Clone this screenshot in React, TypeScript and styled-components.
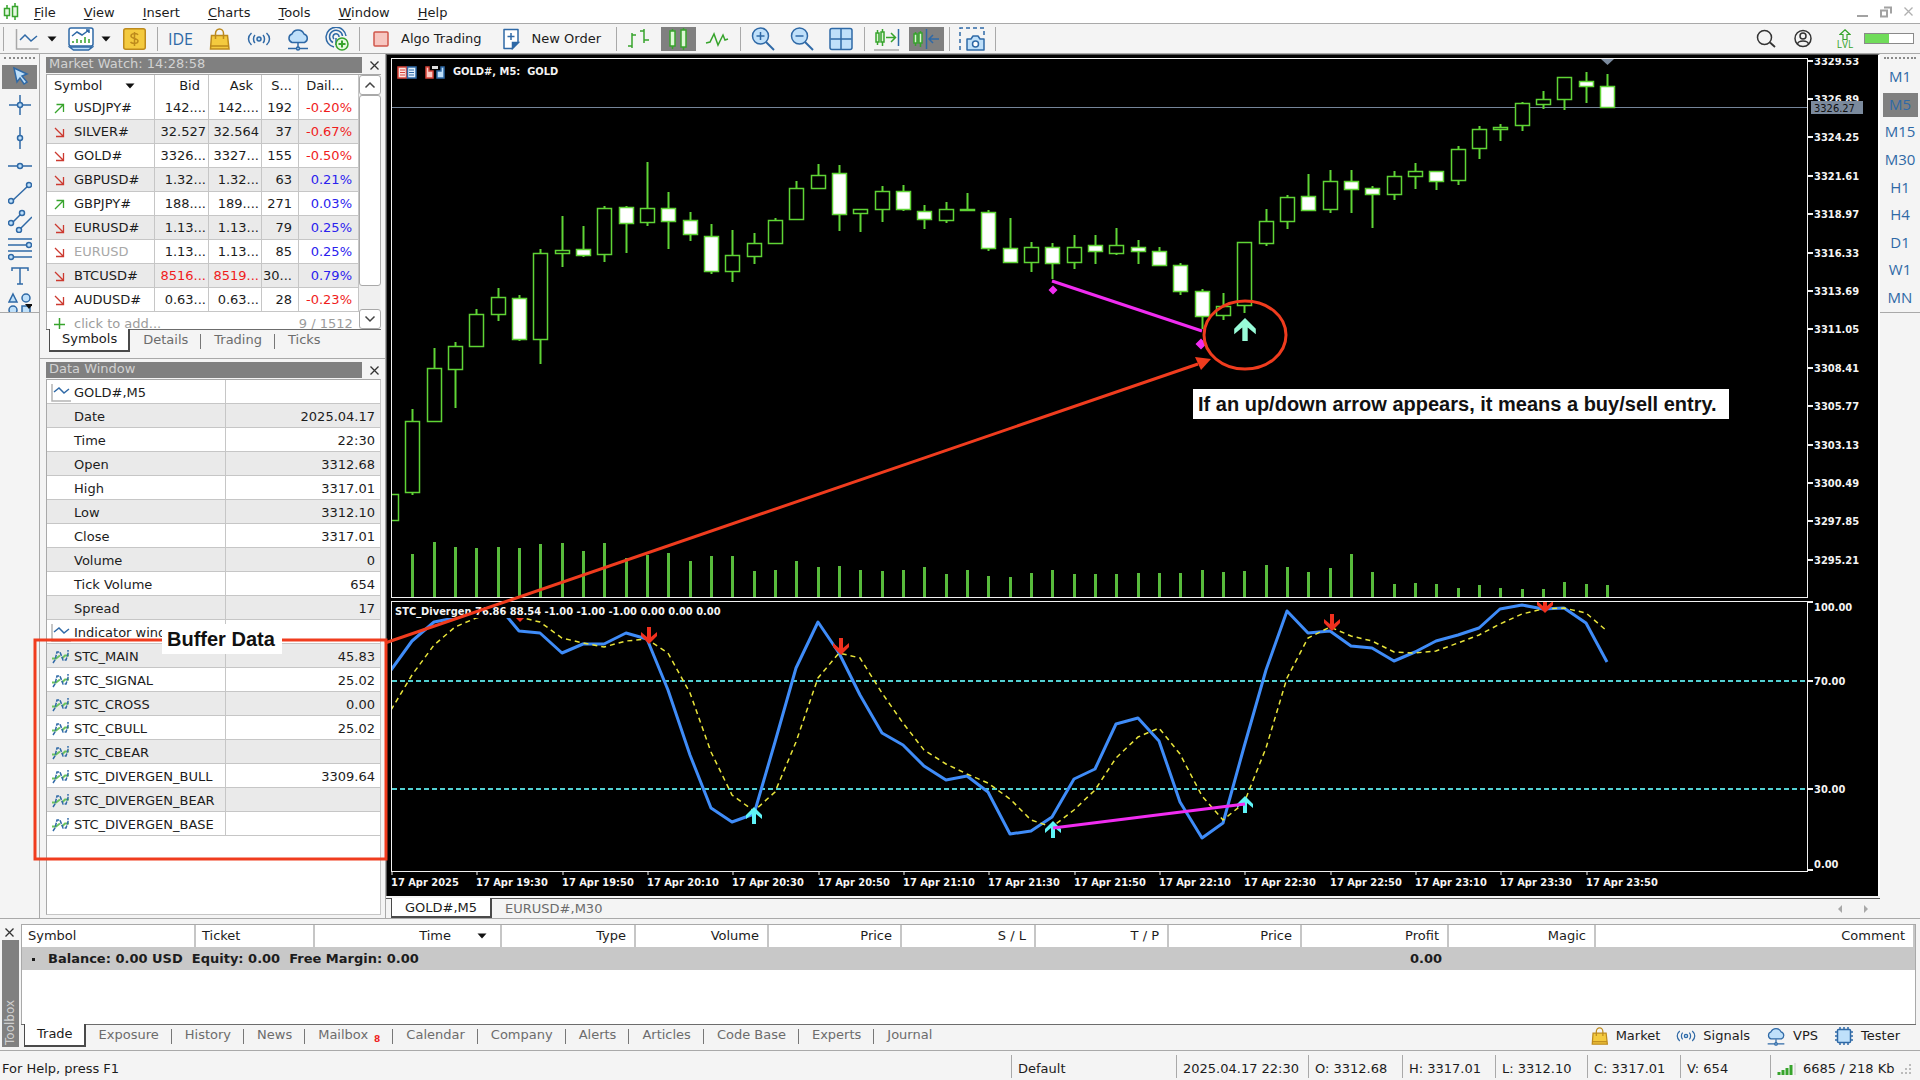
import React from "react";
import styled, { createGlobalStyle, css } from "styled-components";

const UI = '"DejaVu Sans", Verdana, sans-serif';
const NARROW = '"DejaVu Sans Condensed", "DejaVu Sans", sans-serif';
const HUMAN = '"Open Sans", "Noto Sans", sans-serif';
const NOTE = '"Liberation Sans", Arial, sans-serif';

const C = {
  face: "#f4f4f4",
  line: "#a9a9a9",
  grid: "#c6c6c6",
  zebra: "#eaeaea",
  dark: "#808080",
  text: "#1c1c1c",
  muted: "#6c6c6c",
  blue: "#2f69a6",
  sky: "#bfe0fa",
  green: "#37a42c",
  lime: "#5fd435",
  red: "#f03c1e",
  gold: "#f4ca3e",
  goldEdge: "#bd8a1c",
};

const GlobalStyle = createGlobalStyle`
  *, *::before, *::after { box-sizing: border-box; }
  body { margin: 0; background: ${C.face}; }
  button { font: inherit; color: inherit; background: none; border: 0; padding: 0; }
  table { border-collapse: separate; border-spacing: 0; }
`;

const Page = styled.div`
  display: flex;
  flex-direction: column;
  min-height: 100vh;
  background: ${C.face};
  color: ${C.text};
  font: 13px/18px ${UI};
  white-space: pre;
`;

/* ---------- menu and toolbar ---------- */

const MenuBar = styled.nav`
  display: flex;
  align-items: center;
  height: 24px;
  padding: 0 6px 0 2px;
  background: #fff;
  border-bottom: 1px solid ${C.line};
`;
const MenuItem = styled.button`
  height: 22px;
  padding: 3px 14px 0;
  u { text-underline-offset: 2px; }
`;
const WindowControls = styled.div`
  display: flex;
  gap: 10px;
  margin-left: auto;
`;
const PlainButton = styled.button`
  display: flex;
  align-items: center;
  justify-content: center;
`;

const ToolBar = styled.div`
  display: flex;
  align-items: center;
  height: 30px;
  padding: 0 6px 0 3px;
  border-bottom: 1px solid ${C.line};
`;
const ToolGroup = styled.div<{ $end?: number }>`
  display: flex;
  align-items: center;
  gap: 4px;
  padding-right: ${(p) => p.$end || 0}px;
`;
const Divider = styled.span<{ $first?: boolean }>`
  width: 1px;
  height: 24px;
  margin: 0 5px 0 ${(p) => (p.$first ? 0 : 5)}px;
  background: ${C.line};
`;
const Split = styled.div`
  display: flex;
`;
const ToolButton = styled.button<{ $on?: boolean }>`
  display: flex;
  align-items: center;
  justify-content: center;
  width: 35px;
  height: 24px;
  background: ${(p) => (p.$on ? C.dark : "none")};
`;
const CaretButton = styled(ToolButton)`
  width: 15px;
`;
const IdeButton = styled(ToolButton)`
  color: ${C.blue};
  font: 16px/24px ${HUMAN};
`;
const TextToolButton = styled.button`
  display: flex;
  align-items: center;
  gap: 12px;
  height: 24px;
  padding: 0 8px;
`;
const ToolBarEnd = styled.div`
  display: flex;
  align-items: center;
  gap: 10px;
  margin-left: auto;
`;
const AccountButton = styled(PlainButton)`
  padding: 0 13px 0 7px;
`;
const Level = styled.span`
  display: flex;
  flex-direction: column;
  align-items: center;
  width: 18px;
  color: ${C.green};
  font: 10px/9px ${HUMAN};
`;
const Meter = styled.div`
  width: 50px;
  height: 11px;
  border: 1px solid #8a8a8a;
  background: #fff;
`;
const MeterFill = styled.div`
  width: 50%;
  height: 100%;
  background: #70dc5a;
`;

/* ---------- middle area ---------- */

const Main = styled.main`
  position: relative;
  display: flex;
  flex: 1;
`;
const SideBar = styled.div<{ $width: number }>`
  flex: none;
  width: ${(p) => p.$width}px;
  height: 259px;
  padding-top: 3px;
  overflow: hidden;
  border-bottom: 1px solid ${C.line};
`;
const Grip = styled.div`
  height: 2px;
  margin: 0 4px 6px;
  border-top: 2px dotted #8a8a8a;
`;
const SideStack = styled.div<{ $height: number }>`
  display: flex;
  flex-direction: column;
  align-items: center;
  justify-content: space-between;
  height: ${(p) => p.$height}px;
`;
const SideSpacer = styled.span`
  height: 2px;
`;
const Frame = styled(ToolButton)`
  color: ${C.blue};
  font: 15px/22px ${HUMAN};
  padding-bottom: 2px;
`;

const Dock = styled.aside`
  display: flex;
  flex-direction: column;
  flex: none;
  width: 347px;
  border-left: 1px solid ${C.line};
  border-right: 1px solid ${C.line};
`;
const Panel = styled.section<{ $grow?: boolean }>`
  display: flex;
  flex-direction: column;
  padding: 3px 4px 3px 6px;
  ${(p) =>
    p.$grow
      ? css`
          flex: 1;
        `
      : css`
          border-bottom: 1px solid ${C.line};
          padding-bottom: 6px;
        `}
`;
const PanelHead = styled.header`
  display: flex;
  height: 16px;
  margin-bottom: 1px;
  justify-content: space-between;
`;
const PanelTitle = styled.h2`
  flex: none;
  width: 316px;
  margin: 0;
  padding-left: 3px;
  background: ${C.dark};
  color: #d2d2d2;
  font: 13px/14px ${UI};
`;
const CloseButton = styled(PlainButton)`
  width: 14px;
  height: 16px;
`;

const WatchBody = styled.div`
  display: flex;
  height: 255px;
  overflow: hidden;
  border-top: 1px solid ${C.line};
  border-left: 1px solid ${C.line};
  background: #fff;
`;
const Watch = styled.table`
  flex: none;
  table-layout: fixed;
  width: 312px;
  th {
    height: 21px;
    padding: 0 8px 0 0;
    font-weight: 400;
    text-align: right;
    border-right: 1px solid ${C.grid};
  }
  th:first-child { padding-left: 7px; text-align: left; }
  td {
    height: 24px;
    padding: 1px 2px 0 0;
    overflow: hidden;
    text-align: right;
    border-right: 1px solid ${C.grid};
    border-bottom: 1px solid ${C.grid};
  }
  td:first-child { padding-left: 7px; text-align: left; }
  td:nth-child(n + 4), th:nth-child(n + 4) { padding-right: 6px; }
  tbody tr:nth-child(even) { background: ${C.zebra}; }
  tfoot td { padding-top: 0; color: #9c9c9c; border: 0; }
`;
const Name = styled.span<{ $dim?: boolean }>`
  display: flex;
  gap: 9px;
  align-items: center;
  color: ${(p) => (p.$dim ? "#a8a8a8" : "inherit")};
`;
const HeadLabel = styled.span`
  display: flex;
  align-items: center;
  justify-content: space-between;
  padding-right: 11px;
`;
const Tint = styled.span<{ $tone?: "up" | "down" }>`
  color: ${(p) => (p.$tone === "up" ? "#2a22ee" : p.$tone === "down" ? "#f01c1c" : "inherit")};
`;
const ScrollBar = styled.div`
  display: flex;
  flex-direction: column;
  width: 22px;
  background: #f0f0f0;
`;
const ScrollButton = styled(PlainButton)`
  height: 20px;
  border: 1px solid ${C.line};
  border-radius: 3px;
  background: #fff;
`;
const Thumb = styled.div`
  height: 191px;
  margin-bottom: auto;
  border: 1px solid ${C.line};
  border-radius: 3px;
  background: #fff;
`;

const Tabs = styled.div`
  display: flex;
  align-items: stretch;
  height: 23px;
  padding-left: 3px;
  border-top: 1px solid ${C.muted};
`;
const Tab = styled.button<{ $on?: boolean }>`
  position: relative;
  padding: 0 13px 2px;
  color: ${(p) => (p.$on ? C.text : C.muted)};
  ${(p) =>
    p.$on
      ? css`
          margin-top: -1px;
          padding: 0 11px 1px 12px;
          background: #fff;
          border: solid #4a4a4a;
          border-width: 0 2px 2px 1px;
        `
      : css`
          &:not(:last-of-type)::after {
            content: "";
            position: absolute;
            right: 0;
            top: 4px;
            bottom: 3px;
            width: 1px;
            background: #777;
          }
        `}
`;

const DataBody = styled.div`
  flex: 1;
  border: 1px solid ${C.grid};
  border-top-color: ${C.line};
  border-left-color: ${C.line};
  background: #fff;
`;
const DataTable = styled.table`
  table-layout: fixed;
  width: 100%;
  td, th {
    height: 24px;
    padding: 3px 5px 0 4px;
    font-weight: 400;
    text-align: right;
    border-bottom: 1px solid ${C.grid};
  }
  th { text-align: left; border-right: 1px solid ${C.grid}; }
  tr:nth-child(even) { background: ${C.zebra}; }
`;
const DataName = styled.span`
  display: grid;
  grid-template-columns: 20px 1fr;
  gap: 3px;
  align-items: center;
`;

/* ---------- chart ---------- */

const ChartColumn = styled.section`
  display: flex;
  flex-direction: column;
  flex: 1;
  min-width: 0;
`;
const ChartWindow = styled.div`
  display: grid;
  grid-template-columns: minmax(0, 1fr) 70px;
  grid-template-rows: 540fr 3px 271fr 24px;
  flex: 1;
  padding: 3px 0 0 4px;
  border-top: 1px solid #555;
  border-left: 1px solid #555;
  border-right: 2px solid #fff;
  background: #000;
`;
const Pane = styled.div`
  position: relative;
  grid-column: 1;
  overflow: hidden;
  border: 1px solid #f2f2f2;
`;
const Axis = styled.div`
  grid-column: 2;
`;
const TimeAxis = styled.div`
  grid-column: 1 / 3;
  overflow: hidden;
`;
const Canvas = styled.svg`
  display: block;
  width: 100%;
  height: 100%;
  overflow: hidden;
  text { fill: #f4f4f4; font: bold 11px ${NARROW}; }
`;
const PaneTitle = styled.div`
  position: absolute;
  left: 3px;
  top: 3px;
  background: #000;
  color: #f4f4f4;
  font: bold 11px/13px ${NARROW};
`;
const ChartCaption = styled.div`
  position: absolute;
  left: 5px;
  top: 5px;
  display: flex;
  align-items: center;
  gap: 8px;
  color: #f4f4f4;
  font: bold 11px/16px ${NARROW};
`;
const ChartTabs = styled(Tabs)`
  height: 20px;
  margin-top: 2px;
  padding: 0 10px 0 5px;
  border-color: #555;
  ${Tab} { padding: 1px 13px 0; }
`;
const TabScroll = styled.div`
  display: flex;
  gap: 16px;
  margin-left: auto;
`;

/* ---------- annotations over the workspace ---------- */

const Overlay = styled.svg`
  position: absolute;
  left: 0;
  top: 0;
  width: 100%;
  height: 100%;
  pointer-events: none;
`;
const Note = styled.div<{ $x: number; $y: number }>`
  position: absolute;
  left: ${(p) => p.$x}px;
  top: ${(p) => p.$y}px;
  height: 30px;
  background: #fff;
  color: #111;
  font: 700 20px/30px ${NOTE};
`;
const BufferNote = styled(Note)`
  padding: 0 7px 0 5px;
`;
const EntryNote = styled(Note)`
  padding: 0 12px 0 5px;
`;

/* ---------- toolbox and status bar ---------- */

const Toolbox = styled.section`
  display: flex;
  height: 133px;
  padding: 5px 4px 3px 2px;
  border-top: 1px solid ${C.line};
  border-bottom: 1px solid ${C.line};
`;
const ToolboxHandle = styled.div`
  display: flex;
  flex-direction: column;
  width: 17px;
  margin-right: 2px;
`;
const ToolboxTitle = styled.h2`
  flex: 1;
  margin: 0;
  padding-top: 2px;
  background: ${C.dark};
  color: #cfcfcf;
  font: 12px/17px ${UI};
  writing-mode: vertical-rl;
  transform: rotate(180deg);
`;
const ToolboxBody = styled.div`
  display: flex;
  flex-direction: column;
  flex: 1;
  min-width: 0;
`;
const Trades = styled.div`
  flex: 1;
  border: 1px solid ${C.line};
  border-bottom: 0;
  background: #fff;
`;
const TradeTable = styled.table`
  table-layout: fixed;
  width: 100%;
  th {
    height: 22px;
    padding: 0 8px 0 6px;
    font-weight: 400;
    text-align: right;
    border-right: 2px solid ${C.grid};
  }
  th:nth-child(-n + 2) { text-align: left; }
  td {
    height: 23px;
    padding: 0 7px 0 10px;
    background: #c8c8c8;
    font-weight: 700;
    text-align: right;
  }
  td:first-child { text-align: left; }
`;
const SortMark = styled.span`
  display: inline-flex;
  align-items: center;
  gap: 26px;
  padding-right: 5px;
`;
const Bullet = styled.span`
  display: inline-block;
  width: 3px;
  height: 3px;
  margin-right: 13px;
  vertical-align: middle;
  background: ${C.text};
`;
const Badge = styled.small`
  padding-left: 6px;
  color: #f02020;
  font: bold 9px/9px ${UI};
  vertical-align: sub;
`;
const Services = styled.div`
  display: flex;
  gap: 16px;
  margin-left: auto;
  padding-right: 16px;
`;
const Service = styled.a`
  display: flex;
  align-items: center;
  gap: 7px;
  color: inherit;
  text-decoration: none;
`;
const StatusBar = styled.footer`
  display: flex;
  align-items: stretch;
  height: 29px;
  padding: 4px 2px 2px;
`;
const Status = styled.span<{ $width?: number }>`
  display: flex;
  align-items: center;
  gap: 6px;
  flex: ${(p) => (p.$width ? "none" : "1")};
  width: ${(p) => (p.$width ? p.$width + "px" : "auto")};
  padding: 4px 0 0 6px;
  border-left: 1px solid ${C.line};
  &:first-child { padding-left: 0; border: 0; }
`;

/* ---------- icons ---------- */

const Ico = ({ w = 24, h = 24, box, children }: { w?: number; h?: number; box?: string; children: React.ReactNode }) => (
  <svg width={w} height={h} viewBox={box || `0 0 ${w} ${h}`} fill="none" stroke={C.blue} strokeWidth="1.5" aria-hidden="true">
    {children}
  </svg>
);
const Caret = () => (
  <Ico w={10} h={6}>
    <path d="M0.5 0.5h9L5 5.5z" fill="#111" stroke="none" />
  </Ico>
);
const Cross = ({ tone = "#333" }) => (
  <Ico w={11} h={11}>
    <path d="M1.5 1.5l8 8M9.5 1.5l-8 8" stroke={tone} strokeWidth="1.3" />
  </Ico>
);
const Logo = () => (
  <Ico w={18} h={18}>
    <g stroke={C.green}>
      <path d="M5 2v4M5 13v3M13 0v4M13 14v3" />
      <path d="M2.5 5.5h5v7h-5zM10.5 3.5h5v10h-5z" fill="#e6f8e2" />
    </g>
  </Ico>
);
const LineWave = () => (
  <Ico>
    <path d="M1.5 2v20h22" stroke="#a8a8a8" />
    <path d="M5 13l5-5 6 6 6-5" />
  </Ico>
);
const Indicator = () => (
  <Ico w={26} h={24}>
    <rect x="1" y="1" width="24" height="18" rx="2" fill="#fff" />
    <path d="M1.5 20h23l-4 3h-15z" fill={C.sky} />
    <path d="M4 9l5-4 5 3 7-5M18 3h3v3" />
    <path d="M5 16v-2M9 16v-4M13 16v-3M17 16v-6M21 16v-4" stroke={C.green} strokeWidth="1.5" />
  </Ico>
);
const Dollar = () => (
  <Ico w={23} h={22}>
    <rect x="0.75" y="0.75" width="21.5" height="20.5" rx="2" fill={C.gold} stroke={C.goldEdge} />
    <path d="M15 7c-1-2-7-2-7 1s7 2 7 5-6 3-7.500 1M11.500 4v14" stroke={C.goldEdge} />
  </Ico>
);
const Bag = ({ s = 22 }) => (
  <Ico w={s} h={s} box="0 0 22 22">
    <path d="M2.500 7.500h16l1.500 13.500H1.500z" fill={C.gold} stroke={C.goldEdge} />
    <path d="M6.500 11V5.500a4 4.500 0 0 1 8 0V11" stroke={C.goldEdge} />
    <path d="M1.500 18h18" stroke={C.goldEdge} />
  </Ico>
);
const Waves = ({ s = 24 }) => (
  <Ico w={s} h={18} box="0 0 24 18">
    <circle cx="12" cy="9" r="2" fill={C.sky} />
    <path d="M8 5c-2 2-2 6 0 8M16 5c2 2 2 6 0 8M4.500 3c-4 3.500-4 8.500 0 12M19.500 3c4 3.500 4 8.500 0 12" />
  </Ico>
);
const Cloud = ({ s = 24 }) => (
  <Ico w={s} h={s} box="0 0 24 24">
    <path d="M6 15.500a4.500 4.500 0 0 1 0-8.500 6.500 6.500 0 0 1 12 0 4.500 4.500 0 0 1 .5 8.500z" fill={C.sky} />
    <path d="M12 16v5M2 21.500h20" />
    <circle cx="12" cy="21.500" r="1.500" fill={C.sky} />
  </Ico>
);
const Radar = () => (
  <Ico>
    <path d="M9 20A10 10 0 1 1 21 9M8 15.500A6.500 6.500 0 1 1 17.500 9M9 12a3 3 0 1 1 5-2M11 11v7" />
    <circle cx="17" cy="17" r="6" fill="#e6fadf" stroke={C.green} />
    <path d="M17 13.500v7M13.500 17h7" stroke={C.green} strokeWidth="2" />
  </Ico>
);
const StopSquare = () => (
  <Ico w={16} h={16}>
    <rect x="1" y="1" width="14" height="14" rx="1" fill="#f7c6c0" stroke="#d0564a" />
  </Ico>
);
const NewOrderIcon = () => (
  <Ico w={18} h={22}>
    <path d="M2 1.500h14v13l-6 6H2z" fill="#fff" strokeLinejoin="round" />
    <path d="M16.500 14.500h-6v6z" fill={C.blue} />
    <path d="M9 5v7M5.500 8.500h7" />
  </Ico>
);
const BarsIcon = () => (
  <Ico>
    <path d="M5 6v15M1 19h4M5 8h4M17 2v14M13 4h4M17 13h5" stroke={C.green} />
  </Ico>
);
const CandlesIcon = () => (
  <Ico>
    <path d="M6.500 2v20M17.500 1v22" stroke={C.green} />
    <path d="M4 4h5v15H4zM15 3h5v17h-5z" fill="#dcf7d4" stroke={C.green} />
  </Ico>
);
const ZigzagIcon = () => (
  <Ico>
    <path d="M1 16l4-1 4-8 4 11 5-10 2 5 3-1" stroke={C.green} />
  </Ico>
);
const Lens = ({ plus }: { plus?: boolean }) => (
  <Ico>
    <path d="M15 15l8 8" strokeWidth="2" />
    <circle cx="9.500" cy="9" r="8" fill={C.sky} />
    <path d={plus ? "M9.500 5v8M5.500 9h8" : "M5.500 9h8"} />
  </Ico>
);
const TilesIcon = () => (
  <Ico>
    <rect x="1" y="1.500" width="22" height="21" rx="2" fill={C.sky} />
    <path d="M12 2v20M1.500 12h21" />
  </Ico>
);
const ScrollEndIcon = () => (
  <Ico w={26}>
    <path d="M3.500 3v15M8.500 2v17" stroke={C.green} />
    <path d="M2 6h3v9H2zM7 5h3v10H7z" fill="#dcf7d4" stroke={C.green} />
    <path d="M12 10.500h9M17 6l4.500 4.500L17 15" stroke={C.green} />
    <path d="M24.500 2v17" />
    <path d="M0 23h25" stroke="#aaa" />
  </Ico>
);
const ShiftIcon = () => (
  <Ico w={26}>
    <path d="M2.500 5v14M7.500 4v16" stroke={C.green} />
    <path d="M1 7h3v9H1zM6 6h3v10H6z" fill="#dcf7d4" stroke={C.green} />
    <path d="M13.500 2v20M26 12h-9M20 8l-4 4 4 4" />
  </Ico>
);
const CameraIcon = () => (
  <Ico w={26}>
    <path d="M1 23V1h24v8" strokeDasharray="4 3" />
    <path d="M8 12h4l2-3h5l2 3h4v11H8z" fill={C.sky} strokeLinejoin="round" />
    <circle cx="16.500" cy="17" r="3" fill="#fff" />
  </Ico>
);
const SearchIcon = () => (
  <Ico w={20} h={20}>
    <circle cx="8.500" cy="8.500" r="7" stroke="#333" />
    <path d="M14 13.500l5 4.500" stroke="#333" strokeWidth="1.800" />
  </Ico>
);
const UserIcon = () => (
  <Ico w={20} h={20}>
    <g stroke="#333">
      <circle cx="10" cy="9.500" r="8" />
      <circle cx="10" cy="7" r="3" />
      <path d="M4.500 15c1-4 10-4 11 0" />
    </g>
  </Ico>
);
const LevelArrow = () => (
  <Ico w={12} h={11}>
    <path d="M6 .8l5 4.700H8v5H4v-5H1z" stroke={C.green} strokeWidth="1.200" />
  </Ico>
);
const Chevron = ({ down }: { down?: boolean }) => (
  <Ico w={12} h={8}>
    <path d={down ? "M1.500 1.500L6 6l4.500-4.500" : "M1.500 6.500L6 2l4.500 4.500"} stroke="#444" />
  </Ico>
);
const Trend = ({ up }: { up?: boolean }) => (
  <Ico w={11} h={11}>
    <path d={up ? "M1 10l8-8M2.500 1.500h7v7.500" : "M1 1l8 8M9.500 2v7.500H2"} stroke={up ? C.green : "#cc3a30"} strokeWidth="1.300" />
  </Ico>
);
const PlusIcon = () => (
  <Ico w={11} h={13}>
    <path d="M5.500 0v13M0 6.500h11" stroke={C.green} />
  </Ico>
);
const MiniWave = () => (
  <Ico w={20} h={20}>
    <path d="M1 1v17h19" stroke="#b4b4b4" />
    <path d="M3 9l5-4 5 5 5-4" />
  </Ico>
);
const BufferIcon = () => (
  <Ico w={20} h={18}>
    <path d="M1 10.500h4l4-3M11 10.500l3-3h4" stroke="#6cc45e" strokeWidth="2" />
    <path d="M2 15l2-3 2-8h3l3 8h3l2-6 0-4" strokeDasharray="4 1" />
  </Ico>
);
const Triangle = ({ left }: { left?: boolean }) => (
  <Ico w={9} h={8}>
    <path d={left ? "M6 0v8L2 4z" : "M3 0v8l4-4z"} fill="#a8a8a8" stroke="none" />
  </Ico>
);
const Chip = () => (
  <Ico w={20} h={20}>
    <path d="M6 1v18M10 1v18M14 1v18M1 6h18M1 10h18M1 14h18" />
    <rect x="3.500" y="3.500" width="13" height="13" rx="1" fill={C.sky} />
  </Ico>
);
const Signal = () => (
  <Ico w={20} h={12}>
    <path d="M2 12V9M6 12V7M10 12V5M14 12V2" stroke={C.green} strokeWidth="3" />
    <path d="M18 12V0" stroke="#ddd" strokeWidth="2" />
  </Ico>
);
const Resize = () => (
  <Ico w={12} h={12}>
    <path d="M9 2h2M5 6h2M9 6h2M1 10h2M5 10h2M9 10h2" stroke="#bbb" strokeWidth="2" />
  </Ico>
);
const BookIcon = () => (
  <Ico w={20} h={13}>
    <path d="M1 1h8.500v11H1z" fill="#fde4e0" stroke="#d8443a" />
    <path d="M3 4h5M3 6.500h5M3 9h5" stroke="#d8443a" strokeWidth="1" />
    <path d="M10.500 1H19v11h-8.500z" fill="#e2f1fd" />
    <path d="M12 4h5M12 6.500h5M12 9h5" strokeWidth="1" />
  </Ico>
);
const TradeIcon = () => (
  <Ico w={20} h={13}>
    <path d="M1 1h3v4h4v7H1z" fill="#fbc9c2" stroke="#d8443a" />
    <path d="M19 1h-3v4h-4v7h7z" fill={C.sky} />
    <path d="M7 0h6v3H7z" fill="#ddd" stroke="none" />
  </Ico>
);

const drawTools = [
  { name: "Cursor", art: <path d="M6 3l13 6-5 2 5 6-3 2-4-6-3 4z" fill={C.sky} /> },
  { name: "Crosshair", art: <><path d="M12 2v20M1 12h22" /><circle cx="12" cy="12" r="2.500" fill={C.sky} /></> },
  { name: "Vertical line", art: <><path d="M12 1v22" /><circle cx="12" cy="12" r="2.500" fill={C.sky} /></> },
  { name: "Horizontal line", art: <><path d="M0 12h24" /><circle cx="12" cy="12" r="2.500" fill={C.sky} /></> },
  { name: "Trend line", art: <><path d="M3 21L21 4" /><circle cx="3" cy="20" r="2.500" fill={C.sky} /><circle cx="21" cy="4" r="2.500" fill={C.sky} /></> },
  { name: "Channel", art: <><path d="M3 15L14 4M11 21L24 8" /><circle cx="3" cy="14" r="2.500" fill={C.sky} /><circle cx="14" cy="4" r="2.500" fill={C.sky} /><circle cx="11" cy="21" r="2.500" fill={C.sky} /></> },
  { name: "Fibonacci", art: <><path d="M0 2h24M0 8h24M0 14h24M0 20h24" /><circle cx="21" cy="8" r="2.500" fill={C.sky} /><circle cx="3" cy="20" r="2.500" fill={C.sky} /></> },
  { name: "Text", art: <path d="M4 7V4h16v3M12 4v16M9 20h6" /> },
  { name: "Shapes", art: <><path d="M5 2l4 8H1zM14 14h8v9h-8z" fill={C.sky} /><circle cx="18" cy="6" r="4" fill={C.sky} /><circle cx="5" cy="18" r="4" fill={C.sky} /><path d="M17 12h8l-4 5z" fill="#111" stroke="none" /></> },
];

/* ---------- data ---------- */

const menu = ["File", "View", "Insert", "Charts", "Tools", "Window", "Help"];
const frames = ["M1", "M5", "M15", "M30", "H1", "H4", "D1", "W1", "MN"];

const quotes: [string, boolean, string, string, string, string][] = [
  ["USDJPY#", true, "142....", "142....", "192", "-0.20%"],
  ["SILVER#", false, "32.527", "32.564", "37", "-0.67%"],
  ["GOLD#", false, "3326...", "3327...", "155", "-0.50%"],
  ["GBPUSD#", false, "1.32...", "1.32...", "63", "0.21%"],
  ["GBPJPY#", true, "188....", "189....", "271", "0.03%"],
  ["EURUSD#", false, "1.13...", "1.13...", "79", "0.25%"],
  ["EURUSD", false, "1.13...", "1.13...", "85", "0.25%"],
  ["BTCUSD#", false, "8516...", "8519...", "30...", "0.79%"],
  ["AUDUSD#", false, "0.63...", "0.63...", "28", "-0.23%"],
];

const dataRows: [string, string, ("wave" | "buffer")?][] = [
  ["GOLD#,M5", "", "wave"],
  ["Date", "2025.04.17"],
  ["Time", "22:30"],
  ["Open", "3312.68"],
  ["High", "3317.01"],
  ["Low", "3312.10"],
  ["Close", "3317.01"],
  ["Volume", "0"],
  ["Tick Volume", "654"],
  ["Spread", "17"],
  ["Indicator window 1", "", "wave"],
  ["STC_MAIN", "45.83", "buffer"],
  ["STC_SIGNAL", "25.02", "buffer"],
  ["STC_CROSS", "0.00", "buffer"],
  ["STC_CBULL", "25.02", "buffer"],
  ["STC_CBEAR", "", "buffer"],
  ["STC_DIVERGEN_BULL", "3309.64", "buffer"],
  ["STC_DIVERGEN_BEAR", "", "buffer"],
  ["STC_DIVERGEN_BASE", "", "buffer"],
];

/* high, body top, body bottom, low, falling candle; in window pixels */
const candles: [number, number, number, number, number][] = [
  [494, 494, 520, 520, 0], [409, 421, 492, 495, 0], [348, 368, 421, 421, 0], [342, 346, 369, 408, 0],
  [309, 314, 346, 346, 0], [288, 297, 314, 321, 0], [295, 298, 339, 341, 1], [249, 253, 339, 364, 0],
  [216, 250, 253, 267, 0], [226, 249, 255, 257, 1], [206, 208, 254, 262, 0], [206, 207, 223, 253, 1],
  [162, 208, 222, 226, 0], [192, 208, 221, 249, 1], [212, 220, 234, 241, 1], [224, 236, 271, 274, 1],
  [230, 255, 271, 282, 0], [233, 243, 256, 264, 0], [218, 220, 243, 243, 0], [181, 188, 219, 219, 0],
  [164, 175, 188, 188, 0], [165, 173, 214, 231, 1], [209, 209, 213, 232, 0], [186, 191, 209, 222, 0],
  [185, 191, 209, 211, 1], [205, 211, 219, 229, 1], [202, 209, 220, 223, 0], [193, 209, 210, 210, 0],
  [210, 212, 248, 251, 1], [218, 248, 262, 262, 1], [242, 247, 262, 272, 0], [243, 247, 263, 279, 1],
  [235, 247, 262, 269, 0], [235, 245, 251, 264, 1], [228, 245, 253, 255, 0], [240, 247, 251, 264, 1],
  [247, 251, 265, 265, 1], [263, 265, 291, 295, 1], [289, 291, 316, 329, 1], [293, 306, 315, 320, 0],
  [242, 242, 305, 313, 0], [209, 221, 243, 246, 0], [195, 197, 221, 229, 0], [174, 196, 210, 210, 1],
  [170, 181, 209, 213, 0], [170, 181, 189, 213, 1], [186, 188, 194, 228, 1], [171, 176, 194, 200, 0],
  [163, 171, 176, 189, 0], [171, 171, 181, 190, 1], [146, 149, 180, 185, 0], [126, 129, 148, 159, 0],
  [124, 127, 129, 141, 0], [102, 103, 125, 131, 0], [91, 99, 104, 109, 0], [77, 77, 99, 110, 0],
  [72, 81, 86, 103, 1], [74, 86, 107, 107, 1],
];
const volumeTops = [
  554, 542, 547, 548, 547, 548, 544, 543, 551, 543, 558, 555, 553, 561, 556, 556, 571, 570, 561, 567, 566, 570, 571,
  570, 567, 574, 570, 576, 577, 573, 570, 574, 574, 574, 573, 573, 573, 570, 572, 571, 565, 567, 572, 568, 554, 572,
  584, 583, 584, 588, 585, 588, 589, 589, 582, 584, 585,
];
const mainLine = [
  670, 641, 622, 618, 611, 606, 631, 633, 653, 644, 644, 633, 639, 690, 755, 808, 822, 814, 742, 668, 622, 653, 695,
  733, 745, 766, 780, 776, 792, 834, 831, 817, 779, 769, 724, 718, 741, 802, 838, 823, 747, 670, 611, 633, 631, 646,
  648, 661, 652, 641, 635, 628, 609, 605, 609, 608, 623, 662,
];
const signalLine = [
  710, 675, 645, 627, 618, 614, 617, 622, 638, 643, 647, 641, 639, 653, 693, 752, 795, 811, 792, 742, 678, 653, 658,
  693, 723, 750, 764, 774, 783, 799, 820, 827, 810, 790, 758, 737, 728, 754, 796, 820, 803, 748, 678, 638, 627, 636,
  641, 652, 653, 651, 643, 635, 624, 614, 609, 608, 613, 631,
];
const prices = [
  "3329.53", "3326.89", "3324.25", "3321.61", "3318.97", "3316.33", "3313.69", "3311.05", "3308.41", "3305.77",
  "3303.13", "3300.49", "3297.85", "3295.21",
];
const times = [
  "17 Apr 2025", "17 Apr 19:30", "17 Apr 19:50", "17 Apr 20:10", "17 Apr 20:30", "17 Apr 20:50", "17 Apr 21:10",
  "17 Apr 21:30", "17 Apr 21:50", "17 Apr 22:10", "17 Apr 22:30", "17 Apr 22:50", "17 Apr 23:10", "17 Apr 23:30",
  "17 Apr 23:50",
];
const barX = (i: number) => Math.round(391 + (i * 64) / 3);
const track = (ys: number[]) => ys.map((y, i) => `${barX(i)},${y}`).join(" ");

const tradeColumns: [string, number?][] = [
  ["Symbol", 174], ["Ticket", 119], ["Time", 187], ["Type", 134], ["Volume", 133], ["Price", 133], ["S / L", 134],
  ["T / P", 133], ["Price", 133], ["Profit", 147], ["Magic", 147], ["Comment"],
];
const toolTabs = [
  "Trade", "Exposure", "History", "News", "Mailbox", "Calendar", "Company", "Alerts", "Articles", "Code Base",
  "Experts", "Journal",
];

/* ---------- parts ---------- */

const Arrow = ({ x, y, down, size = 1, color }: { x: number; y: number; down?: boolean; size?: number; color: string }) => (
  <path
    transform={`translate(${x} ${y}) scale(${size} ${down ? -size : size})`}
    d="M0 0L8 8V12L2 7V17H-2V7L-8 12V8z"
    fill={color}
  />
);

function PricePane() {
  return (
    <Pane>
      <Canvas role="img" aria-label="GOLD# five minute candles">
        <g transform="translate(-392 -59)">
          <path d="M392 107.500H1900" stroke="#75859a" />
          {volumeTops.map((y, i) => (
            <rect key={i} x={barX(i + 1) - 1} y={y} width="3" height={598 - y} fill="#58bb3c" />
          ))}
          {candles.map(([h, t, b, l, falling], i) => (
            <g key={i} stroke={C.lime} strokeWidth="1.500">
              <path d={`M${barX(i) + 0.5} ${h}V${t}M${barX(i) + 0.5} ${b}V${l}`} strokeWidth="2" />
              <rect x={barX(i) - 6.5} y={t + 0.5} width="14" height={Math.max(b - t, 1)} fill={falling ? "#fff" : "#000"} />
            </g>
          ))}
          <path d="M1601 59h13l-6.500 6z" fill="#7b8a9d" />
          <path d="M1052 281L1202 331" stroke="#f02cf0" strokeWidth="3" />
          <path d="M1053 285.500l4.500 4.500-4.500 4.500-4.500-4.500zM1201 338.500l5.500 5.500-5.500 5.500-5.500-5.500z" fill="#f02cf0" />
          <Arrow x={1245} y={318} size={1.35} color="#98fbd8" />
        </g>
      </Canvas>
      <ChartCaption>
        <BookIcon />
        <TradeIcon />
        GOLD#, M5:  GOLD
      </ChartCaption>
    </Pane>
  );
}

function StochPane() {
  return (
    <Pane>
      <Canvas role="img" aria-label="Stochastic divergence indicator">
        <g transform="translate(-392 -602)" fill="none">
          <path d="M392 681H1900M392 789H1900" stroke="#52cfd2" strokeWidth="2" strokeDasharray="5 3" />
          <polyline points={track(mainLine)} stroke="#3f8cf8" strokeWidth="3" strokeLinejoin="round" />
          <polyline points={track(signalLine)} stroke="#e8e43a" strokeWidth="1.500" strokeDasharray="5 4" />
          <Arrow x={520} y={622} down color="#f0301e" />
          <Arrow x={649} y={644} down color="#f0301e" />
          <Arrow x={841} y={655} down color="#f0301e" />
          <Arrow x={1332} y={631} down color="#f0301e" />
          <Arrow x={1545} y={613} down color="#f0301e" />
          <Arrow x={754} y={807} color="#5ff4f8" />
          <Arrow x={1053} y={821} color="#5ff4f8" />
          <Arrow x={1245} y={796} color="#5ff4f8" />
          <path d="M1053 828L1245 804" stroke="#f02cf0" strokeWidth="3" />
        </g>
      </Canvas>
      <PaneTitle>STC_Divergen 76.86 88.54 -1.00 -1.00 -1.00 0.00 0.00 0.00</PaneTitle>
    </Pane>
  );
}

function Chart() {
  return (
    <ChartColumn>
      <ChartWindow>
        <PricePane />
        <Axis>
          <Canvas>
            {prices.map((p, k) => {
              const y = Math.round(2.5 + k * 38.4);
              return (
                <g key={p}>
                  <path d={`M0 ${y}h5`} stroke="#f2f2f2" strokeWidth="2" />
                  <text x="6" y={y + 4}>{p}</text>
                </g>
              );
            })}
            <rect x="3" y="43" width="52" height="13" fill="#7b8a9d" />
            <text x="6" y="54" style={{ fill: "#111", fontWeight: 400 }}>3326.27</text>
          </Canvas>
        </Axis>
        <span /><span />
        <StochPane />
        <Axis>
          <Canvas>
            <path d="M0 1h5M0 80h5M0 188h5M0 269h5" stroke="#f2f2f2" strokeWidth="2" />
            <text x="6" y="10">100.00</text>
            <text x="6" y="84">70.00</text>
            <text x="6" y="192">30.00</text>
            <text x="6" y="267">0.00</text>
          </Canvas>
        </Axis>
        <TimeAxis>
          <Canvas>
            {times.map((t, k) => (
              <g key={t}>
                <path d={`M${barX(k * 4) - 390} 0v3`} stroke="#f2f2f2" />
                <text x={barX(k * 4) - 391} y="14">{t}</text>
              </g>
            ))}
          </Canvas>
        </TimeAxis>
      </ChartWindow>
      <ChartTabs>
        <Tab $on>GOLD#,M5</Tab>
        <Tab>EURUSD#,M30</Tab>
        <TabScroll>
          <PlainButton aria-label="Previous charts"><Triangle left /></PlainButton>
          <PlainButton aria-label="Next charts"><Triangle /></PlainButton>
        </TabScroll>
      </ChartTabs>
    </ChartColumn>
  );
}

function MarketWatch() {
  return (
    <Panel>
      <PanelHead>
        <PanelTitle>Market Watch: 14:28:58</PanelTitle>
        <CloseButton aria-label="Close Market Watch"><Cross /></CloseButton>
      </PanelHead>
      <WatchBody>
        <Watch>
          <colgroup>
            <col width="108" /><col width="54" /><col width="53" /><col width="37" /><col width="60" />
          </colgroup>
          <thead>
            <tr>
              <th><HeadLabel>Symbol <Caret /></HeadLabel></th>
              <th>Bid</th><th>Ask</th><th>S...</th><th>Dail...  </th>
            </tr>
          </thead>
          <tbody>
            {quotes.map(([name, up, bid, ask, spread, change]) => {
              const hot = name === "BTCUSD#" ? "down" : undefined;
              return (
                <tr key={name}>
                  <td><Name $dim={name === "EURUSD"}><Trend up={up} />{name}</Name></td>
                  <td><Tint $tone={hot}>{bid}</Tint></td>
                  <td><Tint $tone={hot}>{ask}</Tint></td>
                  <td>{spread}</td>
                  <td><Tint $tone={change[0] === "-" ? "down" : "up"}>{change}</Tint></td>
                </tr>
              );
            })}
          </tbody>
          <tfoot>
            <tr>
              <td colSpan={3}><Name><PlusIcon />click to add...</Name></td>
              <td colSpan={2}>9 / 1512 </td>
            </tr>
          </tfoot>
        </Watch>
        <ScrollBar>
          <ScrollButton aria-label="Scroll up"><Chevron /></ScrollButton>
          <Thumb />
          <ScrollButton aria-label="Scroll down"><Chevron down /></ScrollButton>
        </ScrollBar>
      </WatchBody>
      <Tabs>
        <Tab $on>Symbols</Tab><Tab>Details</Tab><Tab>Trading</Tab><Tab>Ticks</Tab>
      </Tabs>
    </Panel>
  );
}

function DataWindow() {
  return (
    <Panel $grow>
      <PanelHead>
        <PanelTitle>Data Window</PanelTitle>
        <CloseButton aria-label="Close Data Window"><Cross /></CloseButton>
      </PanelHead>
      <DataBody>
        <DataTable>
          <colgroup><col width="179" /><col /></colgroup>
          <tbody>
            {dataRows.map(([name, value, icon]) => (
              <tr key={name}>
                <th scope="row">
                  <DataName>
                    {icon === "wave" ? <MiniWave /> : icon === "buffer" ? <BufferIcon /> : <span />}
                    {name}
                  </DataName>
                </th>
                <td>{value}</td>
              </tr>
            ))}
          </tbody>
        </DataTable>
      </DataBody>
    </Panel>
  );
}

export default function App() {
  return (
    <Page>
      <GlobalStyle />
      <MenuBar>
        <Logo />
        {menu.map((m) => (
          <MenuItem key={m}><u>{m[0]}</u>{m.slice(1)}</MenuItem>
        ))}
        <WindowControls>
          <PlainButton aria-label="Minimize"><Ico w={14} h={12}><path d="M2 10h11" stroke="#a2a2a2" strokeWidth="2" /></Ico></PlainButton>
          <PlainButton aria-label="Restore"><Ico w={14} h={12}><path d="M2 4.500h6v6H2zM5 1.500h7v6" stroke="#a2a2a2" strokeWidth="2" /></Ico></PlainButton>
          <PlainButton aria-label="Close"><Cross tone="#b0b0b0" /></PlainButton>
        </WindowControls>
      </MenuBar>

      <ToolBar>
        <Divider $first />
        <ToolGroup>
          <Split>
            <ToolButton aria-label="Line chart"><LineWave /></ToolButton>
            <CaretButton aria-label="Chart types"><Caret /></CaretButton>
          </Split>
          <Split>
            <ToolButton aria-label="Indicators"><Indicator /></ToolButton>
            <CaretButton aria-label="Indicator list"><Caret /></CaretButton>
          </Split>
          <ToolButton aria-label="Deposit"><Dollar /></ToolButton>
        </ToolGroup>
        <Divider />
        <ToolGroup>
          <IdeButton>IDE</IdeButton>
          <ToolButton aria-label="Market"><Bag /></ToolButton>
          <ToolButton aria-label="Signals"><Waves /></ToolButton>
          <ToolButton aria-label="VPS"><Cloud /></ToolButton>
          <ToolButton aria-label="Copy trading"><Radar /></ToolButton>
        </ToolGroup>
        <Divider />
        <ToolGroup $end={2}>
          <TextToolButton><StopSquare />Algo Trading</TextToolButton>
          <TextToolButton><NewOrderIcon />New Order</TextToolButton>
        </ToolGroup>
        <Divider />
        <ToolGroup>
          <ToolButton aria-label="Bars"><BarsIcon /></ToolButton>
          <ToolButton aria-label="Candles" $on><CandlesIcon /></ToolButton>
          <ToolButton aria-label="Line"><ZigzagIcon /></ToolButton>
        </ToolGroup>
        <Divider />
        <ToolGroup>
          <ToolButton aria-label="Zoom in"><Lens plus /></ToolButton>
          <ToolButton aria-label="Zoom out"><Lens /></ToolButton>
          <ToolButton aria-label="Tile windows"><TilesIcon /></ToolButton>
        </ToolGroup>
        <Divider />
        <ToolGroup>
          <ToolButton aria-label="Auto scroll"><ScrollEndIcon /></ToolButton>
          <ToolButton aria-label="Chart shift" $on><ShiftIcon /></ToolButton>
        </ToolGroup>
        <Divider />
        <ToolButton aria-label="Screenshot"><CameraIcon /></ToolButton>
        <Divider />
        <ToolBarEnd>
          <PlainButton aria-label="Search"><SearchIcon /></PlainButton>
          <AccountButton aria-label="Account"><UserIcon /></AccountButton>
          <Level><LevelArrow />LVL</Level>
          <Meter role="img" aria-label="Level progress"><MeterFill /></Meter>
        </ToolBarEnd>
      </ToolBar>

      <Main>
        <SideBar $width={39}>
          <Grip />
          <SideStack $height={251}>
            {drawTools.map((t, i) => (
              <React.Fragment key={t.name}>
                <ToolButton aria-label={t.name} $on={i === 0}><Ico>{t.art}</Ico></ToolButton>
                {i === 1 && <SideSpacer />}
              </React.Fragment>
            ))}
          </SideStack>
        </SideBar>

        <Dock>
          <MarketWatch />
          <DataWindow />
        </Dock>

        <Chart />

        <SideBar $width={40}>
          <Grip />
          <SideStack $height={245}>
            {frames.map((f) => (
              <Frame key={f} $on={f === "M5"}>{f}</Frame>
            ))}
          </SideStack>
        </SideBar>

        <Overlay aria-hidden="true">
          <g transform="translate(0 -54)" fill="none" stroke={C.red} strokeWidth="3">
            <rect x="35" y="640" width="351" height="219" />
            <path d="M385 643L1198 364" />
            <path d="M1211 359l-16-2 6 13z" fill={C.red} stroke="none" />
            <ellipse cx="1245" cy="335" rx="41" ry="34" />
          </g>
        </Overlay>
        <BufferNote $x={162} $y={570}>Buffer Data</BufferNote>
        <EntryNote $x={1193} $y={335}>If an up/down arrow appears, it means a buy/sell entry.</EntryNote>
      </Main>

      <Toolbox>
        <ToolboxHandle>
          <CloseButton aria-label="Close Toolbox"><Cross /></CloseButton>
          <ToolboxTitle>Toolbox</ToolboxTitle>
        </ToolboxHandle>
        <ToolboxBody>
          <Trades>
            <TradeTable>
              <colgroup>
                {tradeColumns.map(([, w], i) => <col key={i} width={w} />)}
              </colgroup>
              <thead>
                <tr>
                  {tradeColumns.map(([name], i) => (
                    <th key={i}>{name === "Time" ? <SortMark>Time<Caret /></SortMark> : name}</th>
                  ))}
                </tr>
              </thead>
              <tbody>
                <tr>
                  <td colSpan={9}><Bullet />Balance: 0.00 USD  Equity: 0.00  Free Margin: 0.00</td>
                  <td>0.00</td>
                  <td colSpan={2} />
                </tr>
              </tbody>
            </TradeTable>
          </Trades>
          <Tabs>
            {toolTabs.map((t, i) => (
              <Tab key={t} $on={i === 0}>{t}{t === "Mailbox" && <Badge>8</Badge>}</Tab>
            ))}
            <Services>
              <Service href="#market"><Bag s={18} />Market</Service>
              <Service href="#signals"><Waves s={20} />Signals</Service>
              <Service href="#vps"><Cloud s={20} />VPS</Service>
              <Service href="#tester"><Chip />Tester</Service>
            </Services>
          </Tabs>
        </ToolboxBody>
      </Toolbox>

      <StatusBar>
        <Status>For Help, press F1</Status>
        <Status $width={165}>Default</Status>
        <Status $width={132}>2025.04.17 22:30</Status>
        <Status $width={94}>O: 3312.68</Status>
        <Status $width={93}>H: 3317.01</Status>
        <Status $width={92}>L: 3312.10</Status>
        <Status $width={93}>C: 3317.01</Status>
        <Status $width={90}>V: 654</Status>
        <Status $width={148}><Signal />6685 / 218 Kb<Resize /></Status>
      </StatusBar>
    </Page>
  );
}
